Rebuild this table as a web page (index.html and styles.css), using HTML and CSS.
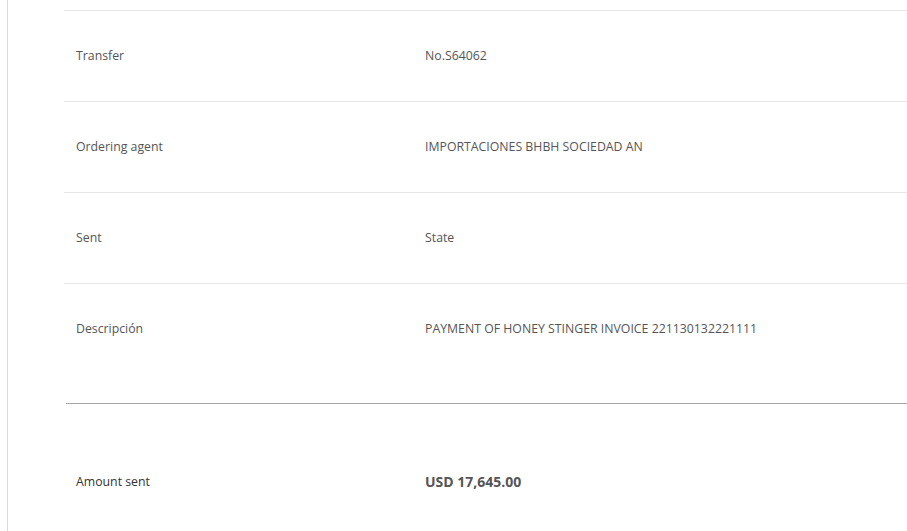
FILE: index.html
```html
<!DOCTYPE html>
<html>
<head>
<meta charset="utf-8">
<link rel="stylesheet" href="styles.css">
</head>
<body>
<div class="frame">
  <div class="details">
    <div class="row"><div class="label">Transfer</div><div class="value">No.S64062</div></div>
    <div class="row"><div class="label">Ordering agent</div><div class="value">IMPORTACIONES BHBH SOCIEDAD AN</div></div>
    <div class="row"><div class="label">Sent</div><div class="value">State</div></div>
    <div class="row last"><div class="label">Descripción</div><div class="value">PAYMENT OF HONEY STINGER INVOICE 221130132221111</div></div>
  </div>
  <div class="total">
    <div class="row amount"><div class="label">Amount sent</div><div class="value">USD 17,645.00</div></div>
  </div>
</div>
</body>
</html>
```
FILE: styles.css
```css
html, body {
  margin: 0;
  padding: 0;
  background: #fff;
  height: 100%;
  overflow: hidden;
}
body {
  font-family: "Open Sans", "Noto Sans", sans-serif;
  font-size: 12.3px;
  color: #555;
}
.frame {
  margin-left: 7px;
  border-left: 1px solid #d9d9d9;
  height: 100%;
  padding-top: 10px;
  padding-left: 56px;
  box-sizing: border-box;
}
.details {
  border-top: 1px solid #e6e6e6;
}
.row {
  display: grid;
  grid-template-columns: 349px 1fr;
  align-items: center;
  height: 88px;
  padding-bottom: 2px;
  padding-left: 12px;
  border-bottom: 1px solid #e6e6e6;
}
.row.last {
  border-bottom: none;
  height: 89px;
  padding-bottom: 0;
}
.total {
  margin-top: 30px;
  margin-left: 2px;
  border-top: 1px solid #a6a6a6;
}
.row.amount {
  border-bottom: none;
  height: 98px;
  padding-top: 28px;
  padding-bottom: 0;
  padding-left: 10px;
  color: #333;
}
.amount .value {
  font-weight: 700;
  font-size: 14px;
  color: #555;
}
```
